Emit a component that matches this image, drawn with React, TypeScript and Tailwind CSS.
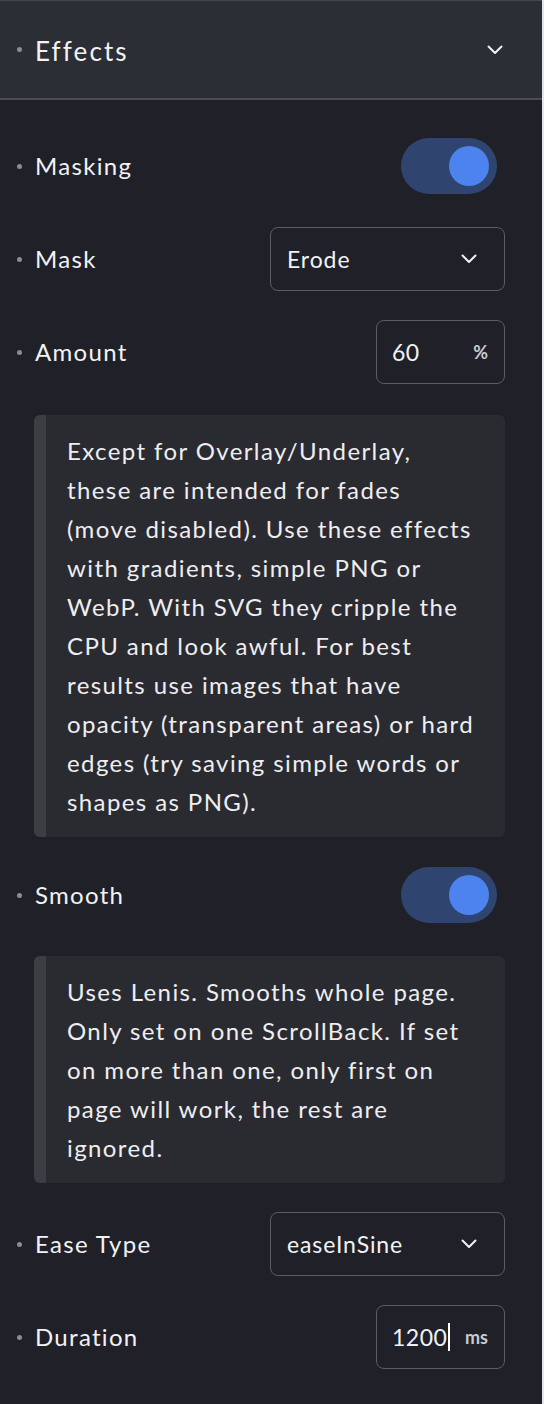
import type { ReactNode } from "react";

const font = { fontFamily: "Lato, 'Noto Sans', sans-serif" };

function Dot(): ReactNode {
	return <span className="size-[5px] shrink-0 rounded-full bg-[#8b8d93]" />;
}

function Chevron(props: Readonly<{ className?: string }>): ReactNode {
	return (
		<svg className={props.className} viewBox="0 0 16 10" fill="none" stroke="currentColor" strokeWidth="2" strokeLinecap="round" strokeLinejoin="round">
			<path d="M1.5 1.5 8 8l6.5-6.5" />
		</svg>
	);
}

function Row(props: Readonly<{ label: string; children: ReactNode; className?: string }>): ReactNode {
	return (
		<div className={`flex h-16 items-center justify-between ${props.className ?? ""}`}>
			<div className="flex items-center gap-x-[13px] pl-[17px]">
				<Dot />
				<span className="text-[24px] tracking-[1.3px] text-[#f2f2f4]">{props.label}</span>
			</div>
			{props.children}
		</div>
	);
}

function Toggle(): ReactNode {
	return (
		<div className="mr-[8px] flex h-[56px] w-[96px] items-center justify-end rounded-full bg-[#2f4570] pr-[8px]">
			<span className="size-[40px] rounded-full bg-[#4c83ee]" />
		</div>
	);
}

function Select(props: Readonly<{ value: string }>): ReactNode {
	return (
		<div className="flex h-16 w-[235px] items-center justify-between rounded-[8px] border-[1.5px] border-[#5b5d63] pl-[16px] pr-[27px]">
			<span className="text-[23px] tracking-[0.9px] text-[#f2f2f4]">{props.value}</span>
			<Chevron className="h-[10px] w-[16px] text-[#f2f2f4]" />
		</div>
	);
}

function NumberInput(props: Readonly<{ value: string; unit: string; caret?: boolean }>): ReactNode {
	return (
		<div className="flex h-16 w-[129px] items-center justify-between rounded-[8px] border-[1.5px] border-[#5b5d63] pl-[15px] pr-[16px]">
			<span className="flex items-center text-[23px] tracking-[0.5px] text-[#f2f2f4]">
				{props.value}
				{props.caret ? <span className="ml-px h-[28px] w-[2px] bg-white" /> : null}
			</span>
			<span className="text-[18px] font-bold text-[#c9cacf]">{props.unit}</span>
		</div>
	);
}

function Note(props: Readonly<{ lines: string[]; className?: string }>): ReactNode {
	return (
		<div className={`ml-[34px] flex overflow-hidden rounded-[6px] bg-[#2a2b30] ${props.className ?? ""}`}>
			<div className="w-[12px] shrink-0 bg-[#3c3e44]" />
			<p className="py-[16px] pl-[21px] pr-[10px] text-[24px] leading-[39px] tracking-[1.4px] text-[#eeeef0]">
				{props.lines.map((line, i) => (
					<span key={line}>
						{line}
						{i < props.lines.length - 1 ? <br /> : null}
					</span>
				))}
			</p>
		</div>
	);
}

export default function App(): ReactNode {
	return (
		<div className="min-h-[1404px] w-[544px] border-r-2 border-[#e4e4ea] bg-[#202128]" style={font}>
			<div className="flex h-[100px] items-center justify-between border-t border-b-2 border-t-[#44464d] border-b-[#4b4d54] bg-[#2c2e35] pl-[17px] pr-[39px]">
				<div className="flex items-center gap-x-[13px]">
					<Dot />
					<span className="pt-[3px] text-[26px] tracking-[2.1px] text-[#f2f2f4]">Effects</span>
				</div>
				<Chevron className="h-[10px] w-[16px] text-[#f2f2f4]" />
			</div>
			<div className="flex flex-col gap-y-[29px] pt-[34px] pr-[37px]">
				<Row label="Masking">
					<Toggle />
				</Row>
				<Row label="Mask">
					<Select value="Erode" />
				</Row>
				<Row label="Amount">
					<NumberInput value="60" unit="%" />
				</Row>
				<Note
					className="mt-[2px]"
					lines={[
						"Except for Overlay/Underlay,",
						"these are intended for fades",
						"(move disabled). Use these effects",
						"with gradients, simple PNG or",
						"WebP. With SVG they cripple the",
						"CPU and look awful. For best",
						"results use images that have",
						"opacity (transparent areas) or hard",
						"edges (try saving simple words or",
						"shapes as PNG).",
					]}
				/>
				<Row label="Smooth" className="-mt-[3px]">
					<Toggle />
				</Row>
				<Note
					lines={[
						"Uses Lenis. Smooths whole page.",
						"Only set on one ScrollBack. If set",
						"on more than one, only first on",
						"page will work, the rest are",
						"ignored.",
					]}
				/>
				<Row label="Ease Type">
					<Select value="easeInSine" />
				</Row>
				<Row label="Duration">
					<NumberInput value="1200" unit="ms" caret />
				</Row>
			</div>
		</div>
	);
}
